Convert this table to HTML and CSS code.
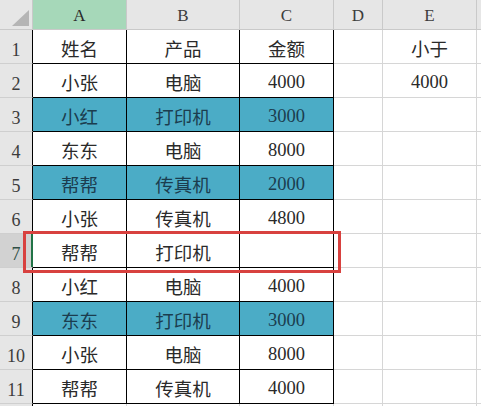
FILE: index.html
```html
<!DOCTYPE html>
<html lang="zh-CN">
<head>
<meta charset="utf-8">
<title>Sheet</title>
<link rel="stylesheet" href="styles.css">
</head>
<body>
<div class="sheet">
  <div class="grid">
    <div class="hd corner"><span class="tri"></span></div>
    <div class="hd col sel-col">A</div>
    <div class="hd col">B</div>
    <div class="hd col">C</div>
    <div class="hd col">D</div>
    <div class="hd col">E</div>
    <div class="hd col last"></div>

    <div class="rh">1</div>
    <div class="c t">姓名</div><div class="c t">产品</div><div class="c t">金额</div><div class="c"></div><div class="c">小于</div><div class="c last"></div>

    <div class="rh">2</div>
    <div class="c t">小张</div><div class="c t">电脑</div><div class="c t">4000</div><div class="c"></div><div class="c">4000</div><div class="c last"></div>

    <div class="rh">3</div>
    <div class="c t hl">小红</div><div class="c t hl">打印机</div><div class="c t hl">3000</div><div class="c"></div><div class="c"></div><div class="c last"></div>

    <div class="rh">4</div>
    <div class="c t">东东</div><div class="c t">电脑</div><div class="c t">8000</div><div class="c"></div><div class="c"></div><div class="c last"></div>

    <div class="rh">5</div>
    <div class="c t hl">帮帮</div><div class="c t hl">传真机</div><div class="c t hl">2000</div><div class="c"></div><div class="c"></div><div class="c last"></div>

    <div class="rh">6</div>
    <div class="c t">小张</div><div class="c t">传真机</div><div class="c t">4800</div><div class="c"></div><div class="c"></div><div class="c last"></div>

    <div class="rh sel-row">7</div>
    <div class="c t active">帮帮</div><div class="c t">打印机</div><div class="c t"></div><div class="c"></div><div class="c"></div><div class="c last"></div>

    <div class="rh">8</div>
    <div class="c t">小红</div><div class="c t">电脑</div><div class="c t">4000</div><div class="c"></div><div class="c"></div><div class="c last"></div>

    <div class="rh">9</div>
    <div class="c t hl">东东</div><div class="c t hl">打印机</div><div class="c t hl">3000</div><div class="c"></div><div class="c"></div><div class="c last"></div>

    <div class="rh">10</div>
    <div class="c t">小张</div><div class="c t">电脑</div><div class="c t">8000</div><div class="c"></div><div class="c"></div><div class="c last"></div>

    <div class="rh">11</div>
    <div class="c t">帮帮</div><div class="c t">传真机</div><div class="c t">4000</div><div class="c"></div><div class="c"></div><div class="c last"></div>

    <div class="rh"></div>
    <div class="c"></div><div class="c"></div><div class="c"></div><div class="c"></div><div class="c"></div><div class="c last"></div>
  </div>
  <div class="mark"></div>
</div>
</body>
</html>
```

FILE: styles.css
```css
html, body {
  margin: 0;
  padding: 0;
  background: #ffffff;
  overflow: hidden;
}

.sheet {
  position: relative;
  width: 481px;
  height: 406px;
  overflow: hidden;
  font-family: "Liberation Serif", "Noto Sans CJK SC", serif;
  color: #2a2a2a;
}

.grid {
  display: grid;
  grid-template-columns: 33px 94px 113px 94px 49px 94px 4px;
  grid-template-rows: 30px repeat(12, 34px);
}

.grid > div {
  box-sizing: border-box;
  display: flex;
  align-items: center;
  justify-content: center;
  white-space: nowrap;
}

/* column headers */
.hd {
  background: #e6e6e6;
  border-right: 1px solid #c9c9c9;
  border-bottom: 1px solid #c9c9c9;
  color: #3c3c3c;
  font-size: 17px;
  padding-top: 3px;
}

.hd.last {
  border-right: none;
}

.hd.sel-col {
  background: #a6d8b9;
  color: #2a2a2a;
}

.corner {
  position: relative;
}

.tri {
  position: absolute;
  right: 3px;
  bottom: 3px;
  width: 0;
  height: 0;
  border-style: solid;
  border-width: 0 0 16px 17px;
  border-color: transparent transparent #b5b5b5 transparent;
}

/* row headers */
.rh {
  background: #e6e6e6;
  border-right: 1px solid #000000;
  border-bottom: 1px solid #cfcfcf;
  color: #3c3c3c;
  font-size: 18px;
  align-items: flex-end !important;
  padding-bottom: 2px;
}

.rh.sel-row {
  background: #d2d2d2;
  color: #2f4f45;
}

/* cells */
.c {
  background: #ffffff;
  border-right: 1px solid #d6d6d6;
  border-bottom: 1px solid #d6d6d6;
  font-size: 18.5px;
  padding-top: 3px;
}

.c.last {
  border-right: none;
}

.c.t {
  border-right-color: #000000;
  border-bottom-color: #000000;
}

.c.hl {
  background: #4bacc6;
  color: #1b3d4f;
}

.c.active {
  position: relative;
}

.c.active::before {
  content: "";
  position: absolute;
  left: -2px;
  top: 0;
  bottom: 0;
  width: 2px;
  background: #217346;
}

.mark {
  position: absolute;
  left: 23px;
  top: 231px;
  width: 318px;
  height: 42px;
  box-sizing: border-box;
  border: 3px solid #d8413f;
}
```
